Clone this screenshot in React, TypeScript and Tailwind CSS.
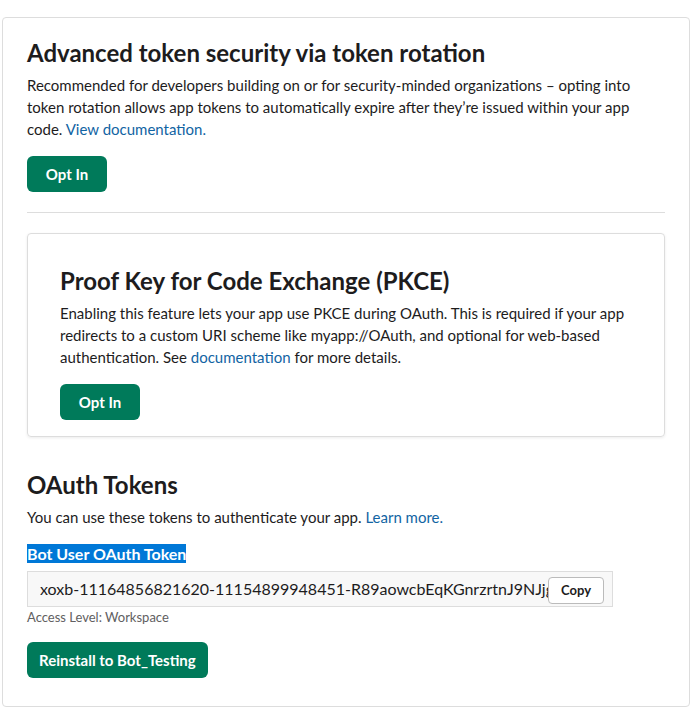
const font = { fontFamily: "Lato, 'Noto Sans', sans-serif" };

function GreenButton({ children }: { children: React.ReactNode }) {
  return (
    <button className="h-9 min-w-[80px] px-3 rounded-md bg-[#007a5a] text-white text-[15px] font-bold leading-none">
      {children}
    </button>
  );
}

export default function App() {
  const token =
    "xoxb-11164856821620-11154899948451-R89aowcbEqKGnrzrtnJ9NJjgTq4sWm2e";

  return (
    <div className="bg-white min-h-screen pt-[17px] pb-[22px] pl-[2px] pr-[6px] text-[#1d1c1d]" style={font}>
      <div className="border border-[#dddddd] rounded-[4px] px-6 pt-[20px] pb-[28px]">
        <section>
          <h2 className="text-[24px] leading-[30px] font-bold">
            Advanced token security via token rotation
          </h2>
          <p className="mt-[6px] text-[15px] leading-[22px]">
            Recommended for developers building on or for security-minded
            organizations – opting into token rotation allows app tokens to
            automatically expire after they’re issued within your app code.{" "}
            <a className="text-[#1264a3]">View documentation.</a>
          </p>
          <div className="mt-4">
            <GreenButton>Opt In</GreenButton>
          </div>
        </section>

        <hr className="mt-5 border-0 border-t border-[#dddddd]" />

        <section className="mt-5 border border-[#dddddd] rounded-[4px] shadow-[0_1px_3px_rgba(0,0,0,0.08)] px-8 pt-[32px] pb-4">
          <h2 className="text-[24px] leading-[30px] font-bold">
            Proof Key for Code Exchange (PKCE)
          </h2>
          <p className="mt-[6px] text-[15px] leading-[22px]">
            Enabling this feature lets your app use PKCE during OAuth. This is
            required if your app redirects to a custom URI scheme like
            myapp://OAuth, and optional for web-based authentication. See{" "}
            <a className="text-[#1264a3]">documentation</a> for more details.
          </p>
          <div className="mt-4">
            <GreenButton>Opt In</GreenButton>
          </div>
        </section>

        <section className="mt-[33px]">
          <h2 className="text-[24px] leading-[30px] font-bold">OAuth Tokens</h2>
          <p className="mt-[6px] text-[15px] leading-[22px]">
            You can use these tokens to authenticate your app.{" "}
            <a className="text-[#1264a3]">Learn more.</a>
          </p>

          <div className="mt-[15px] text-[16px] leading-[22px] font-bold">
            <span className="bg-[#0078d7] text-white">Bot User OAuth Token</span>
          </div>
          <div className="mt-[6px] relative w-[586px] h-9 border border-[#dddddd] bg-[#f8f8f8]">
            <div className="ml-3 mr-[64px] h-full flex items-center text-[16px] whitespace-nowrap overflow-hidden">
              {token}
            </div>
            <button className="absolute right-[8px] top-[5px] h-[27px] w-[56px] rounded-[4px] border border-[#bbbbbb] bg-white text-[13px] font-bold">
              Copy
            </button>
          </div>
          <p className="mt-px text-[13px] leading-[18px] text-[#616061]">
            Access Level: Workspace
          </p>
          <div className="mt-[16px]">
            <GreenButton>Reinstall to Bot_Testing</GreenButton>
          </div>
        </section>
      </div>
    </div>
  );
}
